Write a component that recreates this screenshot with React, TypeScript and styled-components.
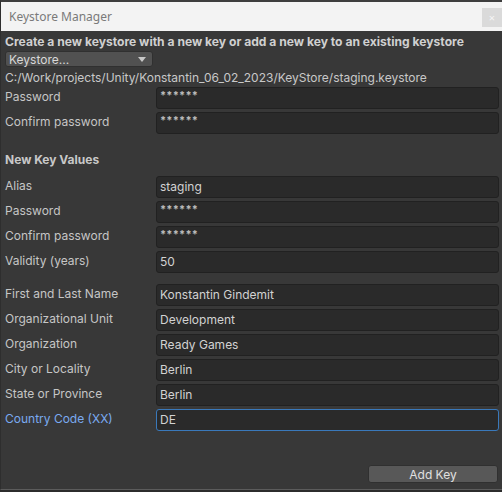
import { createGlobalStyle } from "styled-components";
import styled from "styled-components";

const GlobalStyle = createGlobalStyle`
  html, body {
    margin: 0;
    padding: 0;
    background: #2c2c2c;
    width: 502px;
    height: 492px;
    overflow: hidden;
  }
`;

const Frame = styled.div`
  box-sizing: border-box;
  width: 502px;
  height: 490px;
  display: flex;
  flex-direction: column;
  border-top: 2px solid #3e3e3e;
  border-left: 1px solid #2e2e2e;
  border-bottom: 1px solid #5c5c5c;
  background: #383838;
  font-family: Inter, "Noto Sans", sans-serif;
`;

const TitleBar = styled.div`
  height: 29px;
  flex-shrink: 0;
  display: flex;
  align-items: center;
  justify-content: space-between;
  padding-left: 8px;
  background: #f3f3f3;
  color: #7a7a7a;
  font-family: "Noto Sans", sans-serif;
  font-size: 12px;
`;

const CloseButton = styled.div`
  width: 20px;
  height: 19px;
  margin-top: 1px;
  display: flex;
  align-items: center;
  justify-content: center;
  background: #dadada;
  color: #f5f5f5;
  font-size: 11px;
`;

const Body = styled.div`
  flex: 1;
  display: flex;
  flex-direction: column;
  padding: 1px 3px 6px 4px;
  color: #c6c6c6;
  font-size: 12px;
`;

const Heading = styled.div`
  height: 18px;
  margin-bottom: 1px;
  display: flex;
  align-items: center;
  font-weight: 700;
  font-size: 12.1px;
  color: #d0d0d0;
`;

const Dropdown = styled.div`
  box-sizing: border-box;
  width: 148px;
  height: 16px;
  display: flex;
  align-items: center;
  justify-content: space-between;
  padding: 0 6px 0 3px;
  background: #515151;
  border: 1px solid #303030;
  border-radius: 3px;
  color: #d8d8d8;
`;

const Arrow = styled.span`
  width: 0;
  height: 0;
  border-left: 4px solid transparent;
  border-right: 4px solid transparent;
  border-top: 5px solid #c8c8c8;
`;

const PathRow = styled.div`
  height: 20px;
  display: flex;
  align-items: center;
  color: #c8c8c8;
`;

const Group = styled.div<{ $top: number }>`
  display: flex;
  flex-direction: column;
  gap: 3px;
  margin-top: ${(p) => p.$top}px;
`;

const Row = styled.div`
  display: grid;
  grid-template-columns: 151px 1fr;
  align-items: center;
  height: 22px;
`;

const Label = styled.div<{ $focused?: boolean }>`
  padding-bottom: 3px;
  color: ${(p) => (p.$focused ? "#7aaaf0" : "#c6c6c6")};
`;

const Field = styled.div<{ $focused?: boolean }>`
  box-sizing: border-box;
  height: 22px;
  display: flex;
  align-items: center;
  padding: 0 0 2px 3px;
  background: #2a2a2a;
  border: 1px solid ${(p) => (p.$focused ? "#3a79bb" : "#212121")};
  border-radius: 3px;
  color: #d2d2d2;
`;

const Masked = styled.span`
  font-size: 11px;
  font-weight: 700;
  letter-spacing: 0.2px;
  color: #bdbdbd;
  margin-top: -5px;
`;

const SectionTitle = styled.div`
  height: 22px;
  margin-top: 14px;
  display: flex;
  align-items: center;
  font-weight: 700;
  color: #c8c8c8;
`;

const Footer = styled.div`
  margin-top: auto;
  display: flex;
  justify-content: flex-end;
  padding-right: 1px;
`;

const Button = styled.div`
  box-sizing: border-box;
  width: 130px;
  height: 18px;
  display: flex;
  align-items: center;
  justify-content: center;
  background: #585858;
  border: 1px solid #303030;
  border-radius: 3px;
  color: #e0e0e0;
`;

type Item = { label: string; value: string; secret?: boolean; focused?: boolean };

const keyFields: Item[] = [
  { label: "Alias", value: "staging" },
  { label: "Password", value: "******", secret: true },
  { label: "Confirm password", value: "******", secret: true },
  { label: "Validity (years)", value: "50" },
];

const ownerFields: Item[] = [
  { label: "First and Last Name", value: "Konstantin Gindemit" },
  { label: "Organizational Unit", value: "Development" },
  { label: "Organization", value: "Ready Games" },
  { label: "City or Locality", value: "Berlin" },
  { label: "State or Province", value: "Berlin" },
  { label: "Country Code (XX)", value: "DE", focused: true },
];

function FieldRow({ item }: { item: Item }) {
  return (
    <Row>
      <Label $focused={item.focused}>{item.label}</Label>
      <Field $focused={item.focused}>
        {item.secret ? <Masked>{item.value}</Masked> : item.value}
      </Field>
    </Row>
  );
}

export default function App() {
  return (
    <>
      <GlobalStyle />
      <Frame>
        <TitleBar>
          Keystore Manager
          <CloseButton>×</CloseButton>
        </TitleBar>
        <Body>
          <Heading>
            Create a new keystore with a new key or add a new key to an existing keystore
          </Heading>
          <Dropdown>
            Keystore...
            <Arrow />
          </Dropdown>
          <PathRow>C:/Work/projects/Unity/Konstantin_06_02_2023/KeyStore/staging.keystore</PathRow>
          <Group $top={0}>
            <FieldRow item={{ label: "Password", value: "******", secret: true }} />
            <FieldRow item={{ label: "Confirm password", value: "******", secret: true }} />
          </Group>
          <SectionTitle>New Key Values</SectionTitle>
          <Group $top={6}>
            {keyFields.map((f) => (
              <FieldRow key={f.label} item={f} />
            ))}
          </Group>
          <Group $top={11}>
            {ownerFields.map((f) => (
              <FieldRow key={f.label} item={f} />
            ))}
          </Group>
          <Footer>
            <Button>Add Key</Button>
          </Footer>
        </Body>
      </Frame>
    </>
  );
}
